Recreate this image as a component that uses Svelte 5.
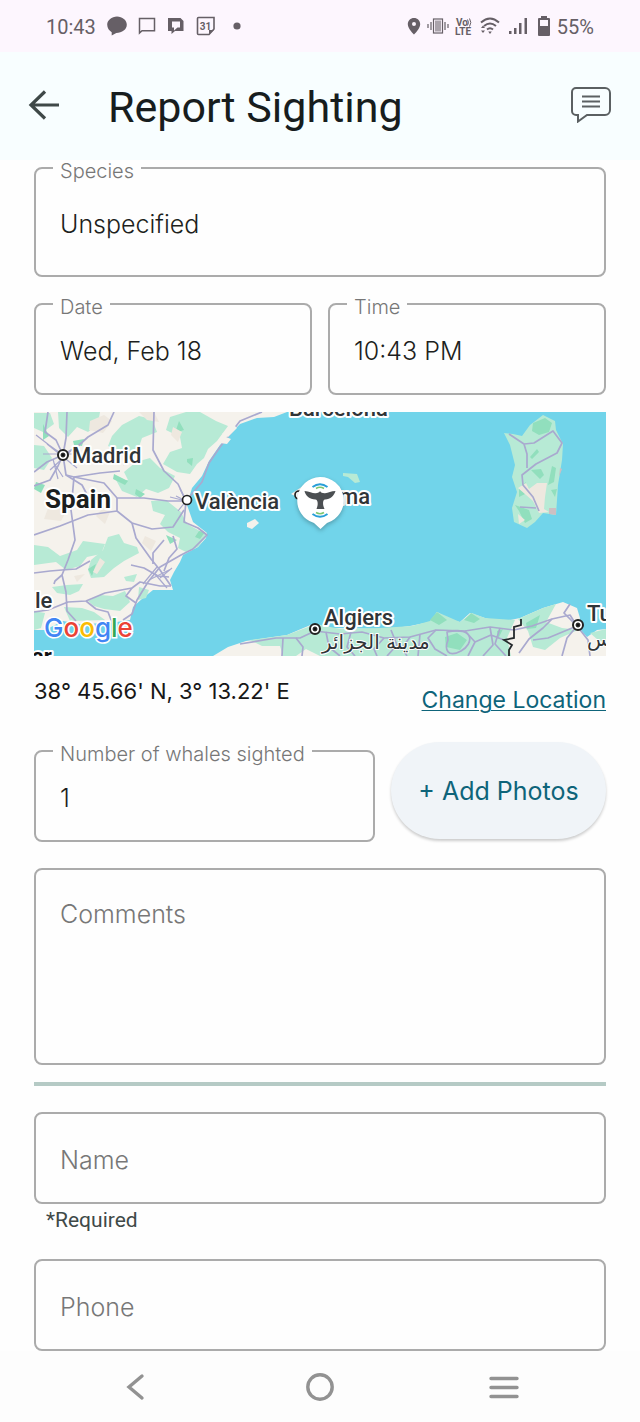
<script>
  let species = $state('Unspecified');
  let date = $state('Wed, Feb 18');
  let time = $state('10:43 PM');
  let count = $state('1');
  let comments = $state('');
  let name = $state('');
  let phone = $state('');

  const forests = [
    'M34 413H50L54 424L43 432L34 428Z',
    'M58 412H100L98 424L88 432L77 427L68 437L59 428Z',
    'M112 436L122 425L139 416L152 419L157 432L142 438L139 447L125 454L108 446Z',
    'M170 417L186 412H200L216 421L228 426L217 441L208 449L204 458L197 464L190 474L177 472L163 464L170 452L182 448L180 437L166 430Z',
    'M124 472L136 462L150 458L160 468L175 476L169 488L158 493L146 489L137 497L122 491L116 480L128 480Z',
    'M34 445L44 446L52 458L44 470L34 468Z',
    'M151 501L166 500L181 512L187 524L198 530L207 535L198 547L186 552L178 548L180 538L168 532L160 524L165 515L153 511Z',
    'M34 545L48 547L60 556L77 550L83 541L105 544L101 554L87 557L80 566L66 570L56 562L34 565Z',
    'M91 560L103 550L108 537L119 534L124 543L137 547L139 553L124 561L114 568L104 577L91 578L88 570Z',
    'M52 587L67 585L83 584L79 591L70 595L57 593Z',
    'M88 601L100 595L113 596L125 591L130 602L120 611L104 609L94 606Z',
    'M64 607L82 608L94 612L105 620L70 621Z',
    'M34 611L45 613L41 628L34 630Z',
    'M124 577L137 574L134 582L126 581Z',
    'M139 587L149 590L146 598L138 600Z'
  ];

  const africaForests = [
    'M250 640L287 635L300 630L316 624L340 629L380 628L412 626L430 621L437 612L460 622L472 613L485 618L515 620L507 638L511 656H320L306 649L296 656H283L280 646L262 646Z',
    'M518 619L543 608L556 604L546 622L562 628L578 630L560 638L545 650L533 647L528 631Z',
    'M590 633L606 629V643L598 640Z'
  ];

  const roads = [
    'M63 455L56 440L45 432L48 412',
    'M63 455L66 438L67 412',
    'M63 455L78 446L88 437L108 425L114 412',
    'M63 455L47 462L34 472',
    'M63 455L58 466L50 480L34 486',
    'M63 455L66 475L74 477L100 473L120 471',
    'M66 475L82 485L92 504',
    'M74 477L104 483L117 498L144 498L168 501L186 501',
    'M74 477L71 510L75 540L68 560L62 575L66 592L67 611L76 621',
    'M117 498V511L132 523L152 529L173 527L184 510',
    'M117 511L88 515L60 526L34 535',
    'M132 523L136 538L151 559L160 570L171 586',
    'M186 501L178 484L164 471L153 450L154 412',
    'M186 501L202 482L209 463L220 447L240 421L262 412',
    'M186 501L184 522L198 528L207 535L193 549L181 555L160 567L148 582L137 600L132 614L123 620',
    'M34 573L50 571L62 570L76 569L90 561',
    'M62 575L55 581L54 584',
    'M34 612L48 610L68 602L86 601L105 593L132 588L140 582L160 586L171 586',
    'M86 601L96 609L108 612L113 625',
    'M132 588L126 596L136 603',
    'M131 565L144 568L158 576L169 577',
    'M153 564L153 553L164 540',
    'M164 571L169 558L177 549L173 536'
  ];

  const africaRoads = [
    'M240 644L276 638L300 638L315 631L340 634L362 632L384 638L410 637L436 630L465 631L490 627L514 630L532 626L552 619L570 615L577 626',
    'M283 638L282 656M296 638L303 647L302 656M326 632L329 647L340 656M351 632L347 647L355 656M384 638L374 649L377 656',
    'M410 637L402 648L407 656M436 630L428 638L435 649L447 656M447 632C475 626 474 644 461 651S444 650 448 640Z',
    'M465 631L475 642L468 656M475 642L491 635L504 640M490 627L493 645L483 656M500 628L495 644L506 656',
    'M552 619L543 628L529 639L519 653M577 626L560 633L548 638L533 640M577 626L567 638L562 656M577 626L588 640L590 656',
    'M570 604L564 613L577 626M391 630L397 645L387 656M420 634L418 656'
  ];
</script>

<div class="screen">
  <div class="status">
    <div class="status-group left">
      <span class="clock">10:43</span>
      <svg width="20" height="20" viewBox="0 0 20 20" fill="currentColor"><path d="M10 .5C4.700.5.2 4.200.2 8.800c0 3.300 2 6 4.500 7.400L4.700 19.500l4.600-2.500C15 17 19.800 13.500 19.800 8.800S15.300.5 10 .5z" /></svg>
      <svg width="18" height="18" viewBox="0 0 18 18" fill="none" stroke="currentColor" stroke-width="1.500"><path d="M1.500 16V1.500h15v12.300H4z" /></svg>
      <svg width="18" height="18" viewBox="0 0 18 18" fill="currentColor"><path fill-rule="evenodd" d="M1 1h12.500l3 3v10H8l-3.500 3v-3H1zM5 4.500v6h2v3l3.500-3H13v-6z" /></svg>
      <svg width="20" height="20" viewBox="0 0 20 20"><path d="M2.500 1.500h15.500V13l-5 5.500H2.500q-1 0-1-1V2.500q0-1 1-1z" fill="none" stroke="currentColor" stroke-width="1.600" /><path d="M13 18.500V14h5z" fill="currentColor" /><text x="9.500" y="13.500" text-anchor="middle" class="calendar-day">31</text></svg>
      <svg width="20" height="20" viewBox="0 0 20 20" fill="currentColor"><circle cx="10" cy="10" r="3.600" /></svg>
    </div>
    <div class="status-group right">
      <svg width="14" height="18" viewBox="0 0 14 18" fill="currentColor"><path fill-rule="evenodd" d="M7 1C3.500 1 .8 3.700.8 7.200.8 11.500 7 17.500 7 17.500s6.200-6 6.200-10.300C13.200 3.700 10.500 1 7 1zm0 4a2 2 0 1 1 0 4 2 2 0 0 1 0-4z" /></svg>
      <svg width="22" height="18" viewBox="0 0 22 18" fill="none" stroke="currentColor" stroke-width="1.200"><rect x="6.500" y="2" width="9" height="14" /><path d="M8 3.500h6v11H8z" fill="currentColor" fill-opacity=".55" stroke="none" /><path d="M4 5v8M1 7v4M18 5v8M21 7v4" /></svg>
      <svg width="18" height="20" viewBox="0 0 18 20" class="volte"><text x="1" y="10">Vo</text><path d="M12.500 3.500q2 3 0 6M14.500 2.500q2.600 4 0 8" fill="none" stroke="currentColor" /><text x="0" y="19">LTE</text></svg>
      <svg width="22" height="18" viewBox="0 0 22 18" fill="none" stroke="currentColor" stroke-width="2"><path d="M2 5.500Q11-2.500 20 5.500M5 9q6-5 12 0M8 12.500q3-2.500 6 0" /><path d="M11 17l-1.800-2.400h3.600zM4 8.500l2 2.500H2zM4 16l2-2.500H2z" fill="currentColor" stroke="none" /></svg>
      <svg width="24" height="18" viewBox="0 0 24 18" fill="currentColor"><path d="M2 14h2.500v3H2zM7 11h2.500v6H7zM12 6h2.500v11H12zM17.500 1H20v16h-2.500z" /></svg>
      <svg width="14" height="22" viewBox="0 0 14 22" fill="currentColor"><path fill-rule="evenodd" d="M4 1h6v2h2a1 1 0 0 1 1 1v16a1 1 0 0 1-1 1H2a1 1 0 0 1-1-1V4a1 1 0 0 1 1-1h2zM3 5v6h8V5z" /></svg>
      <span class="clock">55%</span>
    </div>
  </div>

  <header>
    <button class="icon-button" aria-label="Back">
      <svg width="32" height="32" viewBox="0 0 32 32" fill="none" stroke="#3f4948" stroke-width="3.200"><path d="M31 16H3M17 2.500L3 16l14 13.500" /></svg>
    </button>
    <h1>Report Sighting</h1>
    <button class="icon-button" aria-label="Messages">
      <svg width="40" height="36" viewBox="0 0 40 36" fill="none" stroke="#5b6062" stroke-width="2"><path d="M5 1h29a5 5 0 0 1 5 5v17a5 5 0 0 1-5 5H16L7 34.500V28H5a4 4 0 0 1-4-4V5a4 4 0 0 1 4-4z" /><path d="M11 9.500h18M11 14.500h18M11 19.500h18" /></svg>
    </button>
  </header>

  <main>
    <div class="field tall">
      <label for="species">Species</label>
      <select id="species" bind:value={species}><option>Unspecified</option></select>
    </div>

    <div class="pair">
      <div class="field"><label for="date">Date</label><input id="date" type="text" bind:value={date} /></div>
      <div class="field"><label for="time">Time</label><input id="time" type="text" bind:value={time} /></div>
    </div>

    <svg class="map" viewBox="34 412 572 244" preserveAspectRatio="xMidYMid slice" role="img" aria-label="Map of the western Mediterranean">
      <rect x="34" y="412" width="572" height="244" fill="#71d4ea" />
      <path class="land" d="M34 412H287L274 417L257 418L240 424L228 436L220 445L209 461L202 476L192 488L187 505L193 522L207 533L206 538L198 547L183 555L180 562L174 572L170 580L173 590L153 590L143 598L133 607L130 620L110 623L80 624L63 621L45 630L34 630Z" />
      {#each forests as d}<path class="forest" {d} />{/each}
      <path class="deep" d="M73 441l11-2-2 7-8-1zM114 474l14 7-3 4-12-6zM43 424l6 12-6 4zM179 421l5 9-9 3zM187 459l6-1-1 8-5-4zM36 482l9 3-4 8-7-4zM136 489l9 5-5 4-5-4zM166 535l11 5-7 4zM88 569l8-5-4 12zM199 531l6 1-5 7-5-2z" />
      <path class="sand" d="M90 421l14-6 8 6-9 12-14-3zM139 412h15l5 10-12-2zM123 457l14-3-6 7-8 5zM100 558l5 4-8 12-4-2zM145 536l11 5-5 10-9-8zM173 427l9 5-4 10-7-7zM50 503l17 7-6 11-17-2zM102 509l8 3-5 12-9-8zM74 576l11-2-8 8z" />
      {#each roads as d}<path class="road" {d} />{/each}
      <path class="road thin" d="M43 454h40M47 444l30 24M50 470l24-22M53 459l5 20M180 489l6 12-16-4M176 496l10 5-8 10M160 578l12-10M155 574l12 14M149 580l22-11M143 584l14-17M54 463l9 14M36 435l13 10 14 10" />

      <path class="land" d="M213 656L228 647L246 641L287 635L301 629L313 624L330 628L387 629L410 626L430 622L437 612L450 620L460 622L470 613L485 618L500 622L520 618L543 608L563 602L577 608L580 618L578 627L587 637L597 630L606 629V656Z" />
      {#each africaForests as d}<path class="forest" {d} />{/each}
      <path class="deep" d="M430 620l7-8 10 8-8 5zM464 620l7-7 9 6-6 4zM526 623l14-8-4 13-9 1zM445 637l12-4 10 7-7 10-14-3zM497 631l6-2-5 10z" />
      {#each africaRoads as d}<path class="road" {d} />{/each}
      <path d="M521 619v6l-7 2v11l-10 2 8 5-3 5v6" fill="none" stroke="#252a2c" stroke-width="1.800" />

      <path class="forest" d="M530 425L543 415L555 421L556 430L563 444L562 460L558 485L556 515L543 513L535 522L527 528L514 522L512 508L517 492L512 477L515 465L510 445L504 433L513 434L522 436Z" />
      <path class="deep" d="M533 423l12-5 7 5-3 9-10 3-7-4zM537 449l-7 8 2 2 7-7zM531 470l10-1 3 6-4 4zM552 466l4 2-2 14-6 3zM515 505l14 5 3 9-7 4-6-12zM519 489l7-7-1 12-6 3zM551 490l6-1-2 8z" />
      <path class="sand" d="M537 483h10l-2 14-1 12 5 3-10 1-6-12-15-13 8-5 3 6zM518 514l7 6-6 4z" />
      <path d="M549 508h7v7l-7-1zM560 468l2 1-3 8z" fill="#cdbfc2" />
      <path class="road" d="M509 434l15 10 10-1 19-12 9 12-5 10-21 11-14 11 1 10 10 12 6 14M524 444l3 10v14M520 507l16 1" />
      <path class="forest" d="M343 473l14 1 3 8-5 1-7-6-5-1z" />
      <path class="land" d="M247 523l8-4 4 4-7 6-5-2zM291 494l12-8v14z" />
      <path class="land" d="M220 443l6-6 5 2-4 5zM222 434l12-9 3 3-9 9z" />

      <g class="places">
        <text x="289" y="416" font-size="22">Barcelona</text>
        <text x="72" y="463" font-size="22">Madrid</text>
        <text x="45" y="508" font-size="26" font-weight="700" fill="#1b1e20">Spain</text>
        <text x="195" y="509" font-size="22">València</text>
        <text x="370" y="504" font-size="22" text-anchor="end">Palma</text>
        <text x="35" y="608" font-size="22">le</text>
        <text x="324" y="625" font-size="22">Algiers</text>
        <text x="322" y="649" font-size="20" class="arabic" direction="ltr">مدينة الجزائر</text>
        <text x="587" y="621" font-size="22">Tunis</text>
        <text x="587" y="646" font-size="20" class="arabic" direction="ltr">تونس</text>
        <text x="32" y="664" font-size="22" font-weight="700" fill="#111">ar</text>
      </g>
      <g fill="#fff" stroke="#222">
        {#each [[63, 455], [315, 629], [578, 625]] as [x, y]}
          <circle cx={x} cy={y} r="5" stroke-width="2" /><circle cx={x} cy={y} r="2" fill="#111" />
        {/each}
        <circle cx="187" cy="500" r="4.500" stroke-width="1.700" />
        <circle cx="299" cy="495" r="4" stroke-width="1.700" />
      </g>
      <text x="44" y="637" class="google"><tspan fill="#4285f4">G</tspan><tspan fill="#ea4335">o</tspan><tspan fill="#fbbc04">o</tspan><tspan fill="#4285f4">g</tspan><tspan fill="#34a853">l</tspan><tspan fill="#ea4335">e</tspan></text>

      <g class="pin">
        <path d="M320 477a23.500 23.500 0 0 0-6 46l6.500 6 6.500-6a23.500 23.500 0 0 0-7-46z" fill="#fff" />
        <path d="M304.500 491c5 .5 8 2.500 11 2.300 2.500-.2 4-1 4.500-2.300.8 1.500 2.500 2.300 5 2.200 3.500-.2 6-2.200 10.500-2.200-1.500 5-5 8-10.500 8.500-2.500.5-2.500 5-.5 9.500h-8c2-4.500 1.500-9-1-9.500-6-.5-10-3.500-11-8.500z" fill="#4b4f52" />
        <path d="M312.500 487q7.500-5.500 15 0M312.500 514q7.500 5.500 15 0" fill="none" stroke="#299fd8" stroke-width="2" />
        <path d="M316 488.500q4-2.500 8 0M316 512.500q4 2.500 8 0" fill="none" stroke="#7ec66f" stroke-width="1.500" />
      </g>
    </svg>

    <div class="location">
      <span>38° 45.66' N, 3° 13.22' E</span>
      <a href="#location">Change Location</a>
    </div>

    <div class="count-row">
      <div class="field"><label for="count">Number of whales sighted</label><input id="count" type="text" inputmode="numeric" bind:value={count} /></div>
      <button class="photos">+ Add Photos</button>
    </div>

    <div class="field comments"><textarea aria-label="Comments" placeholder="Comments" bind:value={comments}></textarea></div>
    <hr />
    <div class="field"><input aria-label="Name" aria-describedby="required" placeholder="Name" bind:value={name} /></div>
    <p id="required">*Required</p>
    <div class="field"><input type="tel" aria-label="Phone" placeholder="Phone" bind:value={phone} /></div>
  </main>

  <nav>
    <button aria-label="Back"><svg width="32" height="32" viewBox="0 0 32 32"><path d="M22 5L9 16l13 11" /></svg></button>
    <button aria-label="Home"><svg width="32" height="32" viewBox="0 0 32 32"><circle cx="16" cy="16" r="12.200" /></svg></button>
    <button aria-label="Recent apps"><svg width="32" height="32" viewBox="0 0 32 32"><path d="M3 7.500h26M3 16.500h26M3 25.500h26" /></svg></button>
  </nav>
</div>

<style>
  :global(body) { margin: 0; background: #fefefe; }
  * { box-sizing: border-box; }
  .screen { font-family: Inter, sans-serif; color: #1d1f20; display: flex; flex-direction: column; min-height: 100vh; }
  button { font: inherit; border: 0; background: none; padding: 0; }
  svg { display: block; flex: none; }

  .status { height: 52px; background: #fdf6fe; color: #665f66; display: flex; justify-content: space-between; padding: 0 46px; font-family: Roboto, sans-serif; }
  .status-group { display: flex; align-items: center; }
  .left { gap: 11px; }
  .right { gap: 6px; }
  .clock { font-size: 20px; line-height: 24px; padding-top: 2px; }
  .calendar-day { font: 700 10px Roboto, sans-serif; fill: currentColor; }
  .volte { font: 700 10px Roboto, sans-serif; fill: currentColor; }

  header { height: 108px; background: #f8feff; display: flex; align-items: center; padding: 0 29px 2px 28px; }
  h1 { flex: 1; margin: 0 0 0 48px; padding-top: 4px; font: 400 43px/56px Roboto, sans-serif; color: #171d1e; }

  main { padding: 7px 34px 0; }
  .field { position: relative; height: 92px; border: 2px solid #ababab; border-radius: 8px; background: #fefefe; }
  .tall { height: 110px; }
  .field label { position: absolute; left: 17px; top: -9px; padding: 0 7px; background: #fefefe; font-size: 20px; line-height: 22px; font-weight: 300; color: #777; white-space: nowrap; }
  input, select, textarea { display: block; width: 100%; height: 100%; border: 0; outline: 0; background: none; appearance: none; margin: 0; padding: 3px 24px 0; font: 300 25px/32px Inter, sans-serif; color: #1d1f20; }
  textarea { resize: none; padding-top: 28px; }
  ::placeholder { color: #777; opacity: 1; }
  .pair { display: grid; grid-template-columns: 1fr 1fr; gap: 16px; margin-top: 26px; }

  .map { width: 100%; height: auto; margin-top: 17px; }
  .land { fill: #f5f2ec; }
  .forest { fill: #b7ead5; }
  .deep { fill: #91dfbd; }
  .sand { fill: #eee8df; }
  .road { fill: none; stroke: #a9a9cf; stroke-width: 1.700; stroke-linejoin: round; }
  .thin { stroke-width: 1.200; }
  .places { font-family: Roboto, sans-serif; font-weight: 500; fill: #303437; }
  .places text { stroke: #fff; stroke-width: 4px; stroke-linejoin: round; paint-order: stroke; }
  .places .arabic { font-family: "DejaVu Sans", sans-serif; font-weight: 400; stroke-width: 2px; }
  .google { font: 500 26px Inter, sans-serif; stroke: #fff; stroke-width: 3px; paint-order: stroke; }
  .pin { filter: drop-shadow(0 2px 2px rgb(0 0 0 / .25)); }

  .location { display: flex; justify-content: space-between; margin-top: 19px; height: 41px; font-size: 22px; line-height: 32px; color: #171717; }
  .location a { align-self: flex-end; color: #0e647a; font-size: 23px; text-decoration-thickness: 1px; text-underline-offset: 2px; }
  .count-row { display: flex; align-items: flex-start; gap: 16px; margin-top: 26px; }
  .count-row .field { flex: 1; margin-top: 8px; }
  .photos { flex: none; width: 215px; height: 97px; border-radius: 49px; background: #f0f4f8; color: #0e647a; font-size: 25px; box-shadow: 0 2px 3px rgb(0 0 0 / .2); }
  .comments { height: 197px; margin-top: 26px; }
  hr { height: 4px; margin: 17px 0 26px; border: 0; background: #b5cac5; }
  p { margin: 4px 0 27px 12px; font: 400 21px/24px Roboto, sans-serif; color: #3f4948; }

  nav { flex: 1; min-height: 71px; display: grid; grid-template-columns: repeat(3, 184px); justify-content: center; align-items: center; background: #fdfdfd; }
  nav button { display: flex; justify-content: center; }
  nav svg { fill: none; stroke: #929292; stroke-width: 3.400; stroke-linecap: round; }
</style>
